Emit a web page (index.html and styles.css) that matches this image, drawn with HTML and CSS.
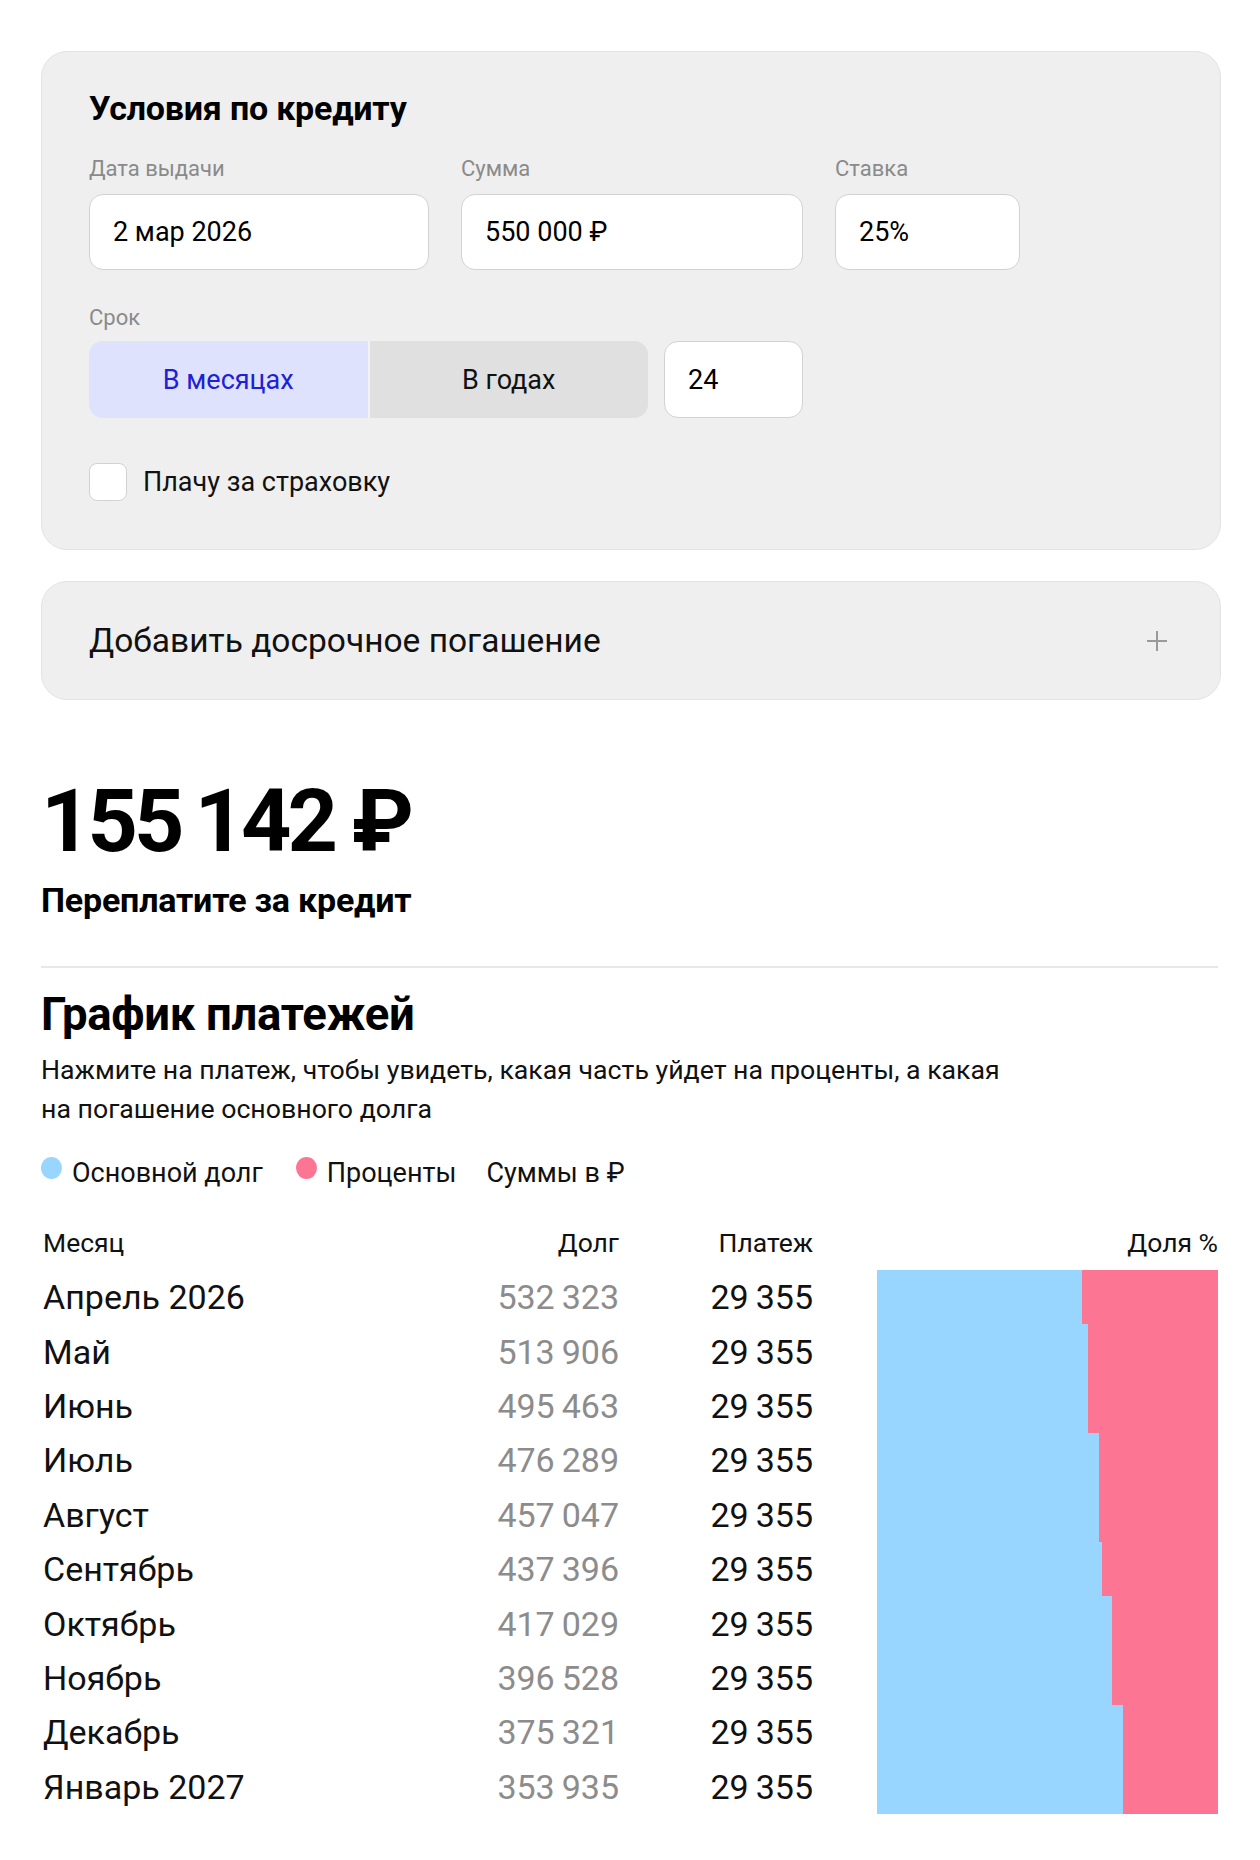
FILE: index.html
```html
<!DOCTYPE html>
<html lang="ru">
<head>
<meta charset="utf-8">
<title>Кредитный калькулятор</title>
<link rel="stylesheet" href="styles.css">
</head>
<body>
<main class="page">
  <section class="card conditions">
    <h2 class="card-title">Условия по кредиту</h2>
    <div class="fields">
      <div class="field">
        <div class="label">Дата выдачи</div>
        <div class="input input-date">2 мар 2026</div>
      </div>
      <div class="field">
        <div class="label">Сумма</div>
        <div class="input input-sum">550 000 ₽</div>
      </div>
      <div class="field">
        <div class="label">Ставка</div>
        <div class="input input-rate">25%</div>
      </div>
    </div>
    <div class="field term">
      <div class="label">Срок</div>
      <div class="term-row">
        <div class="segmented">
          <div class="seg seg-active">В месяцах</div>
          <div class="seg">В годах</div>
        </div>
        <div class="input input-term">24</div>
      </div>
    </div>
    <label class="check">
      <span class="box"></span>
      <span class="check-text">Плачу за страховку</span>
    </label>
  </section>

  <section class="card early">
    <span class="early-text">Добавить досрочное погашение</span>
    <svg class="plus" width="22" height="22" viewBox="0 0 22 22" aria-hidden="true">
      <path d="M11 1v20M1 11h20" stroke="#9a9a9a" stroke-width="2" fill="none"/>
    </svg>
  </section>

  <section class="summary">
    <div class="big-sum">155&#8201;142 ₽</div>
    <div class="big-caption">Переплатите за кредит</div>
  </section>

  <hr class="divider">

  <section class="schedule">
    <h2 class="schedule-title">График платежей</h2>
    <p class="schedule-desc">Нажмите на платеж, чтобы увидеть, какая часть уйдет на проценты, а какая<br>на погашение основного долга</p>
    <div class="legend">
      <span class="legend-item"><span class="dot dot-blue"></span>Основной долг</span>
      <span class="legend-item"><span class="dot dot-pink"></span>Проценты</span>
      <span class="legend-item legend-note">Суммы в ₽</span>
    </div>

    <div class="table">
      <div class="th th-month">Месяц</div>
      <div class="th num">Долг</div>
      <div class="th num">Платеж</div>
      <div class="th num th-share">Доля %</div>

      <div class="td month">Апрель 2026</div><div class="td num debt">532&#8201;323</div><div class="td num pay">29&#8201;355</div>
      <div class="td bar"><span class="b-blue" style="width:60%"></span><span class="b-pink"></span></div>

      <div class="td month">Май</div><div class="td num debt">513&#8201;906</div><div class="td num pay">29&#8201;355</div>
      <div class="td bar"><span class="b-blue" style="width:62%"></span><span class="b-pink"></span></div>

      <div class="td month">Июнь</div><div class="td num debt">495&#8201;463</div><div class="td num pay">29&#8201;355</div>
      <div class="td bar"><span class="b-blue" style="width:62%"></span><span class="b-pink"></span></div>

      <div class="td month">Июль</div><div class="td num debt">476&#8201;289</div><div class="td num pay">29&#8201;355</div>
      <div class="td bar"><span class="b-blue" style="width:65%"></span><span class="b-pink"></span></div>

      <div class="td month">Август</div><div class="td num debt">457&#8201;047</div><div class="td num pay">29&#8201;355</div>
      <div class="td bar"><span class="b-blue" style="width:65%"></span><span class="b-pink"></span></div>

      <div class="td month">Сентябрь</div><div class="td num debt">437&#8201;396</div><div class="td num pay">29&#8201;355</div>
      <div class="td bar"><span class="b-blue" style="width:66%"></span><span class="b-pink"></span></div>

      <div class="td month">Октябрь</div><div class="td num debt">417&#8201;029</div><div class="td num pay">29&#8201;355</div>
      <div class="td bar"><span class="b-blue" style="width:69%"></span><span class="b-pink"></span></div>

      <div class="td month">Ноябрь</div><div class="td num debt">396&#8201;528</div><div class="td num pay">29&#8201;355</div>
      <div class="td bar"><span class="b-blue" style="width:69%"></span><span class="b-pink"></span></div>

      <div class="td month">Декабрь</div><div class="td num debt">375&#8201;321</div><div class="td num pay">29&#8201;355</div>
      <div class="td bar"><span class="b-blue" style="width:72%"></span><span class="b-pink"></span></div>

      <div class="td month">Январь 2027</div><div class="td num debt">353&#8201;935</div><div class="td num pay">29&#8201;355</div>
      <div class="td bar"><span class="b-blue" style="width:72%"></span><span class="b-pink"></span></div>
    </div>
  </section>
</main>
</body>
</html>
```

FILE: styles.css
```css
* { box-sizing: border-box; }

html, body {
  margin: 0;
  padding: 0;
  background: #ffffff;
}

body {
  font-family: Roboto, "Liberation Sans", sans-serif;
  color: #000;
}

.page {
  padding: 51px 39px 40px 41px;
}

/* Cards */
.card {
  background: #efefef;
  border: 1.5px solid #e3e3e3;
  border-radius: 26px;
}

.conditions {
  padding: 36px 47px 48px 47px;
}

.card-title {
  margin: 0;
  font-size: 34px;
  line-height: 40px;
  font-weight: 700;
  letter-spacing: -0.2px;
}

.fields {
  display: flex;
  gap: 32px;
  margin-top: 28px;
}

.label {
  font-size: 22px;
  line-height: 26px;
  color: #8a8a8a;
  margin-bottom: 12px;
}

.input {
  height: 76px;
  background: #fff;
  border: 1.5px solid #d2d2d2;
  border-radius: 14px;
  padding: 0 23px;
  display: flex;
  align-items: center;
  font-size: 27px;
}

.input-date { width: 340px; }
.input-sum { width: 342px; }
.input-rate { width: 185px; }

.term {
  margin-top: 35px;
}

.term .label { margin-bottom: 10px; }

.term-row {
  display: flex;
  gap: 16px;
}

.segmented {
  display: flex;
  width: 559px;
  height: 77px;
  border-radius: 14px;
  overflow: hidden;
}

.seg {
  flex: 1;
  display: flex;
  align-items: center;
  justify-content: center;
  background: #e0e0e0;
  font-size: 27px;
  color: #111;
}

.seg-active {
  background: #dee2fd;
  color: #2020d6;
  border-right: 2px solid #f2f2f2;
}

.input-term {
  width: 139px;
  height: 77px;
}

.check {
  display: flex;
  align-items: center;
  gap: 16px;
  margin-top: 45px;
}

.box {
  width: 38px;
  height: 38px;
  background: #fff;
  border: 1.5px solid #d2d2d2;
  border-radius: 8px;
}

.check-text {
  font-size: 27px;
  color: #111;
}

/* Early repayment */
.early {
  margin-top: 31px;
  height: 119px;
  display: flex;
  align-items: center;
  justify-content: space-between;
  padding: 0 52px 0 47px;
}

.early-text {
  font-size: 33.5px;
  color: #111;
}

/* Summary */
.summary {
  margin-top: 71px;
}

.big-sum {
  font-size: 88px;
  line-height: 100px;
  font-weight: 700;
  letter-spacing: -4px;
}

.big-caption {
  margin-top: 11px;
  font-size: 34px;
  line-height: 36px;
  font-weight: 700;
  letter-spacing: -0.2px;
}

.divider {
  margin: 48px 3px 0 0;
  border: 0;
  height: 2px;
  background: #e8e8e8;
}

/* Schedule */
.schedule-title {
  margin: 19px 0 0 0;
  font-size: 45.5px;
  line-height: 56px;
  font-weight: 700;
  letter-spacing: -0.3px;
}

.schedule-desc {
  margin: 8px 0 0 0;
  font-size: 26.7px;
  line-height: 39px;
  color: #111;
}

.legend {
  display: flex;
  gap: 33px;
  margin-top: 28px;
  font-size: 27px;
  line-height: 32px;
  color: #111;
}

.legend-item {
  display: flex;
  align-items: flex-start;
}

.legend-note { margin-left: -3px; }

.dot {
  width: 21px;
  height: 22px;
  border-radius: 50%;
  margin-right: 10px;
  margin-top: 0;
}

.dot-blue { background: #98d6ff; }
.dot-pink { background: #fc7593; }

/* Table */
.table {
  display: grid;
  grid-template-columns: 380px 198px 194px 1fr;
  margin: 39px 3px 0 0;
}

.th {
  font-size: 26.5px;
  line-height: 30px;
  padding-bottom: 12px;
  color: #111;
}

.th-month { padding-left: 2px; }

.num { text-align: right; }

.td {
  height: 54.4px;
  display: flex;
  align-items: center;
  font-size: 34px;
}

.td.num { justify-content: flex-end; }

.month { padding-left: 2px; color: #111; }

.debt { color: #8c8c8c; }

.pay { color: #111; }

.bar {
  margin-left: 64px;
  align-items: stretch;
}

.b-blue { background: #98d6ff; }
.b-pink { background: #fc7593; flex: 1; }
```
